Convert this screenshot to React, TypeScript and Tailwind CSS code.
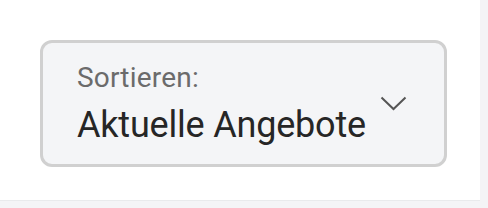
export default function App() {
    return (
        <div className="min-h-screen w-full bg-[#f4f4f6]">
            <div className="w-[480px] h-[201px] bg-white border-b border-[#e9eaec] p-10">
                <button
                    type="button"
                    className="flex items-center w-[407px] h-[127px] rounded-[12px] border-[3px] border-[#d0d0d0] bg-[#f4f5f7] pl-[34px] pr-[37px] text-left"
                >
                    <div className="flex flex-col flex-1 pt-[1px]" style={{ fontFamily: "Roboto, sans-serif" }}>
                        <span className="text-[28px] leading-[32px] text-[#6b6b6b] tracking-[0.2px]">Sortieren:</span>
                        <span className="mt-[9px] text-[36px] leading-[44px] text-[#262626] tracking-[-0.2px]">Aktuelle Angebote</span>
                    </div>
                    <svg width="27" height="15" viewBox="0 0 27 15" fill="none" className="shrink-0">
                        <path d="M1.5 1.5 L13.5 13 L25.5 1.5" stroke="#555555" strokeWidth="2" />
                    </svg>
                </button>
            </div>
        </div>
    );
}
